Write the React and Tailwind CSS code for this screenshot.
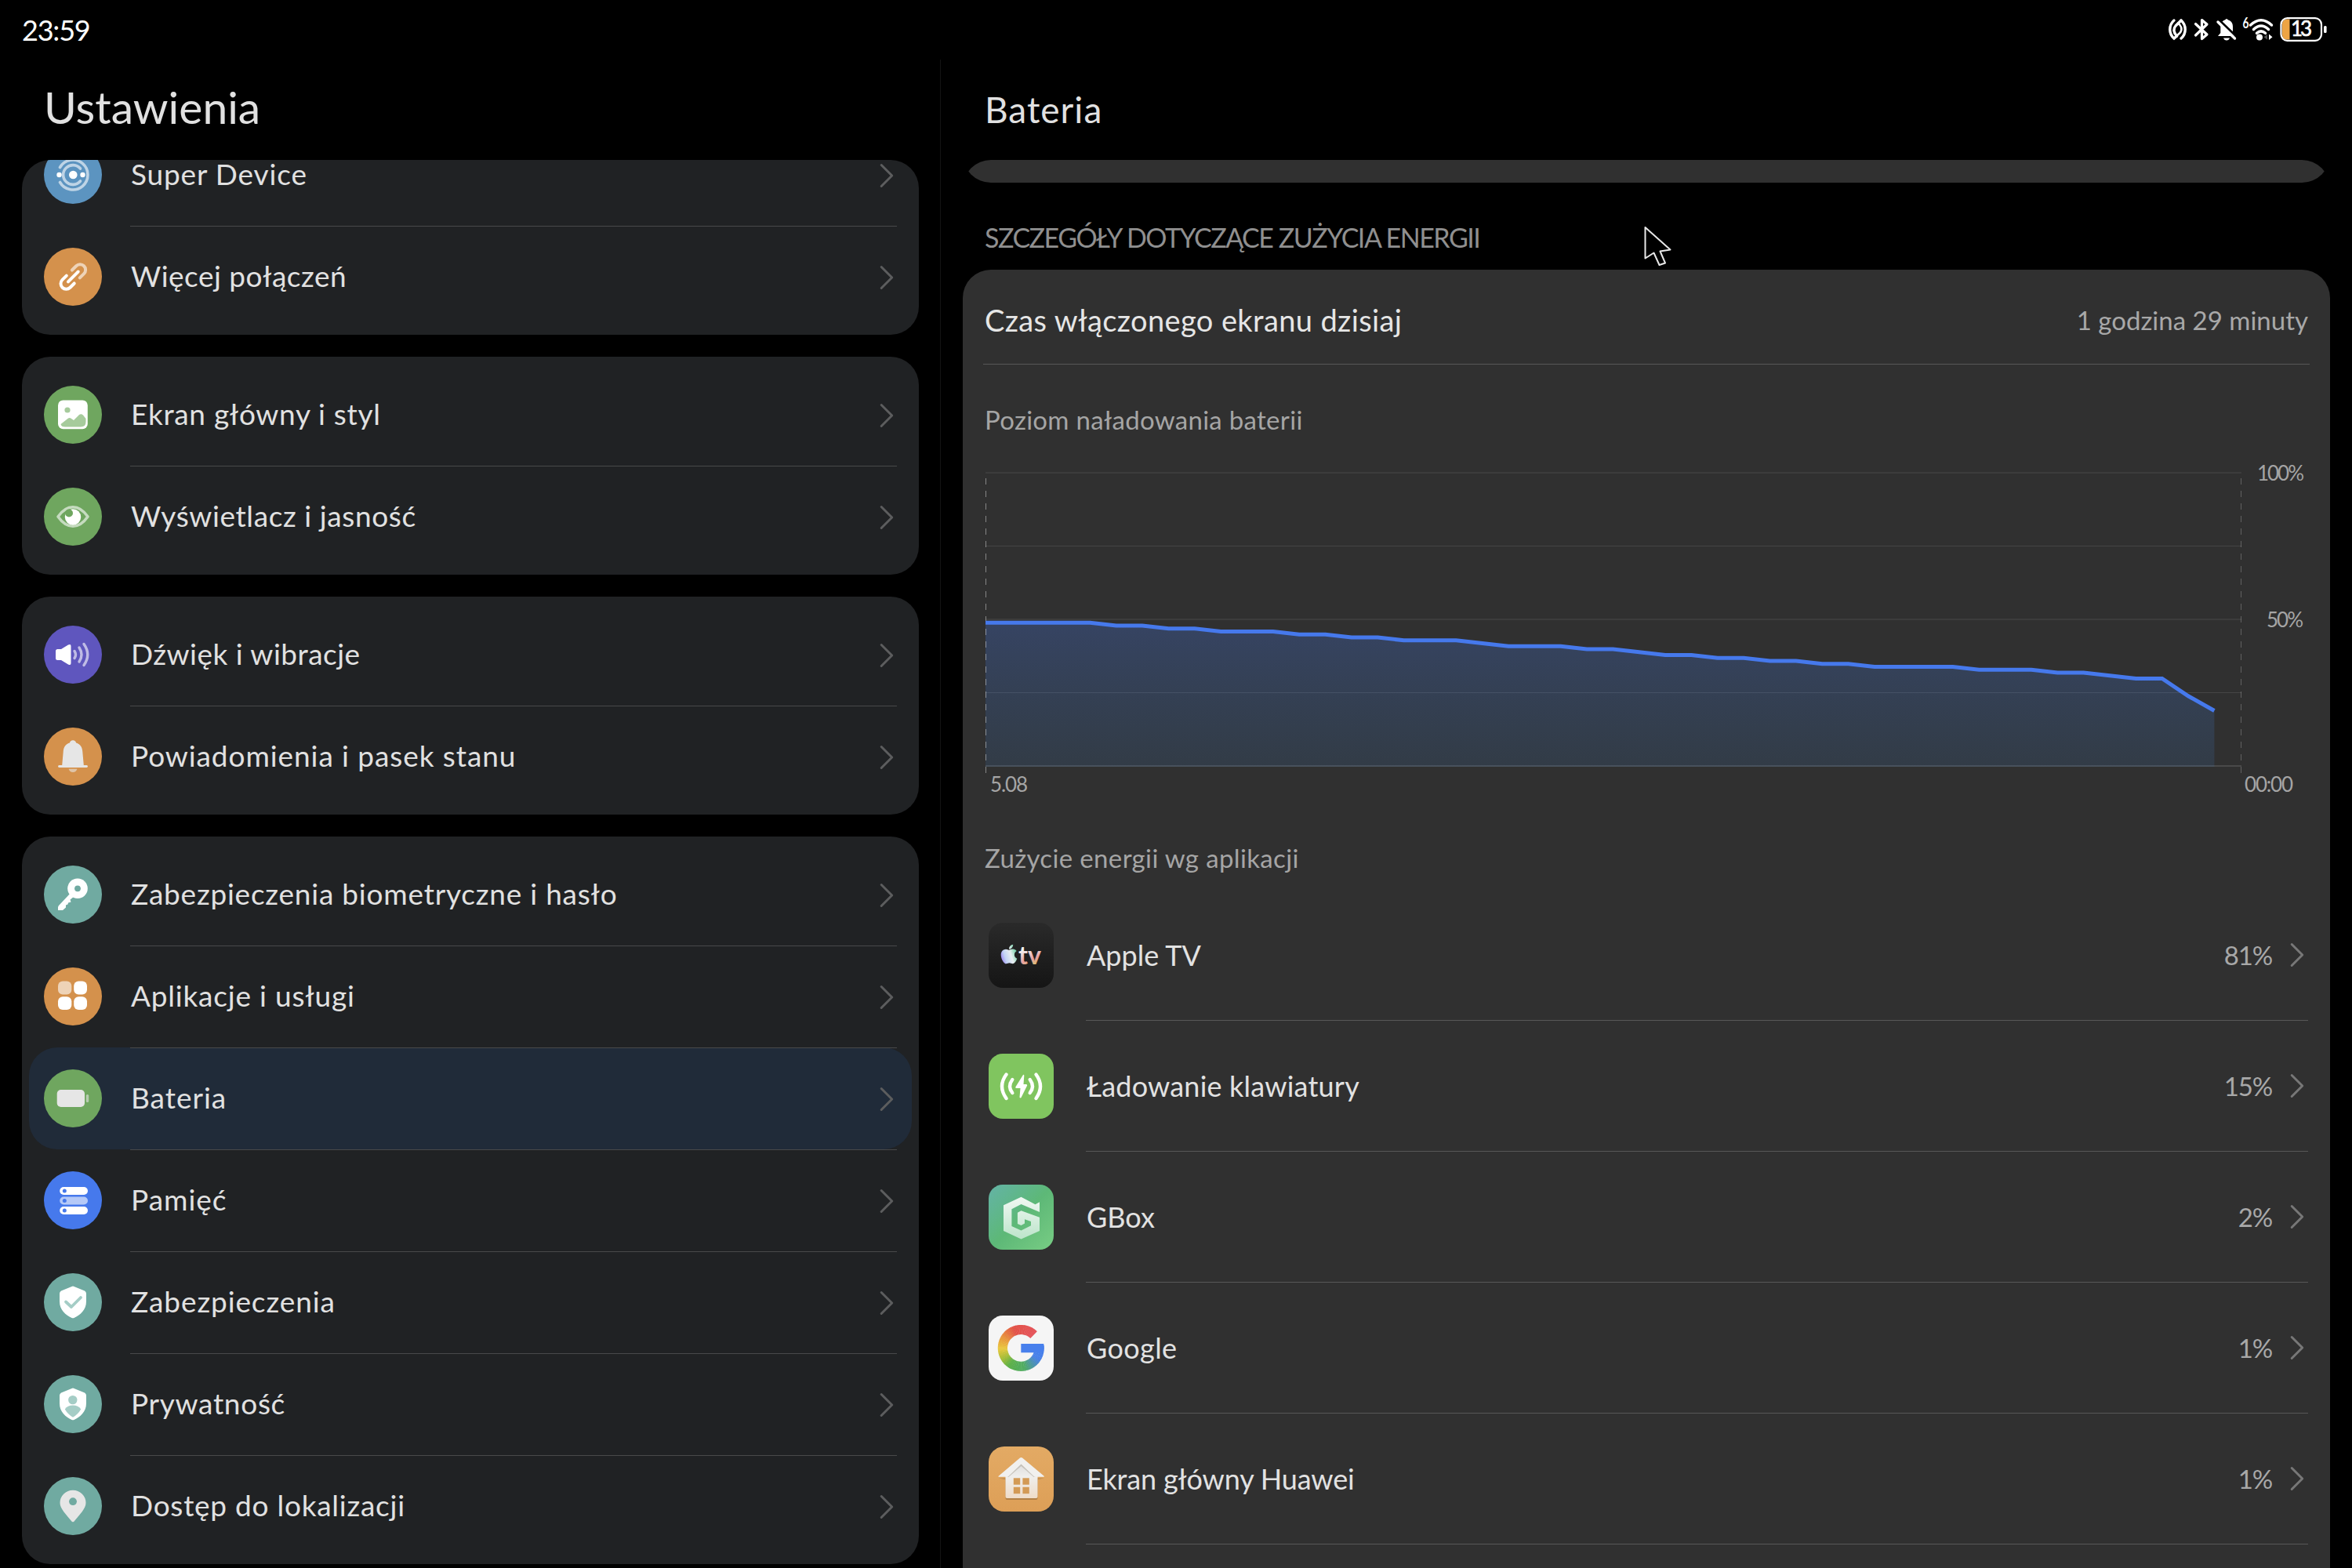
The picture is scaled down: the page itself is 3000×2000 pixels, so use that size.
import React from "react";
import { FaApple } from "react-icons/fa";

/* ---------- round glyphs of the settings list (74 x 74) ---------- */

const shield =
  "M35.5 17 Q37 16.2 38.5 17 L52 22.5 Q54 23.5 54 26 V36 C54 47 46 53.5 38.5 57 Q37 57.6 35.5 57 C28 53.5 20 47 20 36 V26 Q20 23.5 22 22.5Z";

const glyphs = {
  superDevice: (
    <g fill="none" strokeLinecap="round" strokeWidth="3.6">
      <path d="M20.5 27.5 A19 19 0 1 1 20.5 46.5" stroke="#fff" strokeOpacity=".6" />
      <path d="M46.5 29 A12.4 12.4 0 1 0 46.5 45" stroke="#fff" strokeOpacity=".6" />
      <circle cx="37.3" cy="37" r="5.3" fill="#fff" />
      <circle cx="19.5" cy="37" r="3.2" fill="#fff" />
      <circle cx="49.5" cy="37" r="3.2" fill="#fff" />
    </g>
  ),
  link: (
    <g fill="none" stroke="#fff" strokeWidth="4" strokeLinecap="round" transform="translate(37.3 37) rotate(-45)">
      <path d="M5 -7 H12.5 A7 7 0 0 1 12.5 7 H5" strokeOpacity=".6" />
      <path d="M-5 -7 H-12.5 A7 7 0 0 0 -12.5 7 H-5" />
      <path d="M-9 0 H9" />
    </g>
  ),
  picture: (
    <g>
      <rect x="18" y="18.4" width="37.8" height="36.8" rx="6.5" fill="#fff" />
      <circle cx="30" cy="31" r="3.6" fill="#a6cb9c" />
      <path d="M21.5 49 L31 41.5 Q33 40.3 35 42 L38 44 L45 37 Q47.5 35.3 50 37.5 L53.5 42 V46 Q53.5 52.5 47 52.5 H27 Q22 52.5 21.5 49Z" fill="#a6cb9c" />
    </g>
  ),
  eye: (
    <g>
      <path d="M18 37 C24 28.5 30.5 24.8 37 24.8 S50 28.5 56 37 C50 45.5 43.5 49.2 37 49.2 S24 45.5 18 37Z" fill="none" stroke="#fff" strokeOpacity=".6" strokeWidth="3.6" strokeLinejoin="round" />
      <circle cx="37" cy="37.5" r="10.2" fill="#fff" />
      <circle cx="32" cy="32.5" r="5" fill="#6fa65f" />
    </g>
  ),
  sound: (
    <g fill="none" strokeLinecap="round">
      <path d="M17.5 30 H22 L31 24.6 Q34.5 23 34.5 26 V48 Q34.5 51 31 49.4 L22 44 H17.5 Q15 44 15 41.5 V32.5 Q15 30 17.5 30Z" fill="#fff" />
      <g stroke="#fff" strokeOpacity=".6" strokeWidth="3.4">
        <path d="M39 32.5 Q42 37 39 41.5" />
        <path d="M45 28 Q51 37 45 46" />
        <path d="M51 23.5 Q60.5 37 51 50.5" />
      </g>
    </g>
  ),
  bell: (
    <g fill="#e6e6e6">
      <circle cx="37" cy="20.5" r="4.2" />
      <path d="M37 19 C46 19 49 25 49.3 31 L50.8 48 H54.5 Q56 48.2 56 49.5 T54.5 51 H19.5 Q18 50.8 18 49.5 T19.5 48 H23.2 L24.7 31 C25 25 28 19 37 19Z" />
      <path d="M31.5 52.8 H42.5 Q41 57 37 57 T31.5 52.8Z" fillOpacity=".6" />
    </g>
  ),
  key: (
    <g>
      <path d="M35 34 L19 51 Q18 52.2 18 53.5 V57 H24 L28 53.5 V50.5 L30.5 49.5 L31 47.5 L34.5 46.5 L33.5 43.5 L36 41.5 L40 38Z" fill="#fff" />
      <circle cx="43" cy="29.3" r="12.8" fill="#fff" />
      <circle cx="43" cy="29.3" r="3.9" fill="#70aaa1" />
    </g>
  ),
  apps: (
    <g fill="#fff">
      <rect x="18" y="17.6" width="17.3" height="16.8" rx="6" fillOpacity=".6" />
      <rect x="38.2" y="17.6" width="16.8" height="16.8" rx="6" />
      <rect x="18" y="37.2" width="17.3" height="16.8" rx="6" />
      <rect x="38.2" y="37.2" width="16.8" height="16.8" rx="6" />
    </g>
  ),
  battery: (
    <g fill="#e6e6e6">
      <rect x="16.7" y="26" width="35.3" height="22" rx="5" />
      <rect x="53.8" y="32" width="3.4" height="10" rx="1.5" fillOpacity=".6" />
    </g>
  ),
  storage: (
    <g>
      <rect x="20.2" y="20" width="35.8" height="10" rx="5" fill="#fff" />
      <rect x="20.2" y="32.5" width="35.8" height="10" rx="5" fill="#fff" fillOpacity=".6" />
      <rect x="20.2" y="45" width="35.8" height="10" rx="5" fill="#fff" />
      <g fill="#4679ec">
        <circle cx="26.3" cy="25" r="2.5" />
        <circle cx="26.3" cy="37.5" r="2.5" />
        <circle cx="26.3" cy="50" r="2.5" />
      </g>
    </g>
  ),
  security: (
    <g>
      <path d={shield} fill="#fff" />
      <path d="M28 36.5 L35 43 L47 31" fill="none" stroke="#a5cdc6" strokeWidth="3.8" strokeLinecap="round" strokeLinejoin="round" />
    </g>
  ),
  privacy: (
    <g>
      <path d={shield} fill="#fff" />
      <circle cx="36.8" cy="31.6" r="5.7" fill="#a5cdc6" />
      <path d="M26.8 43.5 Q30 38.4 37 38.4 T47.2 43.5 Q43.5 50 37 53.8 Q30.5 50 26.8 43.5Z" fill="#a5cdc6" />
    </g>
  ),
  location: (
    <g>
      <path d="M37 57.2 Q35.8 57.2 35 56 C28.5 47.5 20.5 40.5 20.5 33 A16.5 16.2 0 0 1 53.5 33 C53.5 40.5 45.5 47.5 39 56 Q38.2 57.2 37 57.2Z" fill="#e6e6e6" />
      <circle cx="37" cy="31.2" r="4.9" fill="#70aaa1" />
    </g>
  ),
};

const groups = [
  [
    { label: "Super Device", glyph: "superDevice", color: "bg-[#5c94c0]", track: "tracking-[0.85px]" },
    { label: "Więcej połączeń", glyph: "link", color: "bg-[#d4914c]", track: "tracking-[0.5px]" },
  ],
  [
    { label: "Ekran główny i styl", glyph: "picture", color: "bg-[#6fa65f]", track: "tracking-[0.7px]" },
    { label: "Wyświetlacz i jasność", glyph: "eye", color: "bg-[#6fa65f]", track: "tracking-[0.6px]" },
  ],
  [
    { label: "Dźwięk i wibracje", glyph: "sound", color: "bg-[#5f56be]", track: "tracking-[0.5px]" },
    { label: "Powiadomienia i pasek stanu", glyph: "bell", color: "bg-[#d4914c]", track: "tracking-[0.92px]" },
  ],
  [
    { label: "Zabezpieczenia biometryczne i hasło", glyph: "key", color: "bg-[#70aaa1]", track: "tracking-[0.78px]" },
    { label: "Aplikacje i usługi", glyph: "apps", color: "bg-[#d4914c]", track: "tracking-[0.8px]" },
    { label: "Bateria", glyph: "battery", color: "bg-[#6fa65f]", track: "tracking-[1px]", selected: true },
    { label: "Pamięć", glyph: "storage", color: "bg-[#4679ec]", track: "tracking-[1px]" },
    { label: "Zabezpieczenia", glyph: "security", color: "bg-[#70aaa1]", track: "tracking-[0.9px]" },
    { label: "Prywatność", glyph: "privacy", color: "bg-[#70aaa1]", track: "tracking-[0.7px]" },
    { label: "Dostęp do lokalizacji", glyph: "location", color: "bg-[#70aaa1]", track: "tracking-[0.75px]" },
  ],
];

function Chevron({ className }) {
  return (
    <svg viewBox="0 0 18 32" className={`h-8 w-[18px] shrink-0 ${className}`} fill="none" stroke="currentColor" strokeWidth="3" strokeLinecap="round" strokeLinejoin="round">
      <path d="M2.2 2.5 L15.7 16 L2.2 29.5" />
    </svg>
  );
}

function SettingRow({ item, first }) {
  return (
    <div className={`mx-[9px] flex h-[130px] items-center px-[19px] ${item.selected ? "rounded-[36px] bg-[#202b39]" : ""}`}>
      <div className={`size-[74px] shrink-0 overflow-hidden rounded-full ${item.color}`}>
        <svg viewBox="0 0 74 74" className="size-full">{glyphs[item.glyph]}</svg>
      </div>
      <div className={`ml-9 flex flex-1 items-center justify-between self-stretch border-t pr-1 ${first ? "border-transparent" : "border-[#48494a]"}`}>
        <span className={`pb-[3px] pl-px text-[37px] leading-10 whitespace-nowrap text-[#e1e1e1] ${item.track}`}>{item.label}</span>
        <Chevron className="text-[#5c5d5e]" />
      </div>
    </div>
  );
}

/* ---------- status bar ---------- */

function StatusIcons() {
  return (
    <svg viewBox="2760 16 216 44" className="h-11 w-[216px]" fill="none" stroke="#fff">
      {/* nfc */}
      <g strokeWidth="3.4" strokeLinecap="round">
        <path d="M2773 26 C2766 32 2766 43 2773 49 L2776.5 46" />
        <path d="M2782 26 C2789 32 2789 43 2782 49" />
        <path d="M2782 26 L2775 33 C2771.5 37 2773 42 2776.5 46" />
        <path d="M2773 49 L2781 41.5 C2784 37 2782 32.5 2778 29.5" strokeWidth="2.6" />
      </g>
      {/* bluetooth */}
      <path d="M2800.5 30.5 L2815 44 L2808.5 49.5 V25.5 L2815 31 L2800.5 45" strokeWidth="3.2" strokeLinecap="round" strokeLinejoin="round" />
      {/* muted bell */}
      <path d="M2832 46 H2850 L2848 43 V34 C2848 28.5 2844.5 26 2842 25.6 Q2840 22.5 2838 25.6 C2835 26.3 2832.5 29 2832.3 34 V42 L2829 46Z" fill="#fff" stroke="none" />
      <path d="M2836 48.5 H2844 Q2843 51.5 2840 51.5 T2836 48.5Z" fill="#fff" stroke="none" />
      <path d="M2830.5 25.5 L2853 47" stroke="#000" strokeWidth="3" />
      <path d="M2829 28 L2850.5 49" strokeWidth="3.4" strokeLinecap="round" />
      {/* wifi */}
      <g strokeWidth="3.5" strokeLinecap="round">
        <path d="M2870.5 32 Q2884 19.5 2897.5 32" />
        <path d="M2874.5 37.5 Q2884 28.5 2893.5 37.5" />
        <path d="M2878.5 42.3 Q2884 37.5 2889.5 42.3" />
      </g>
      <circle cx="2882" cy="47.5" r="4" fill="#fff" stroke="none" />
      <path d="M2892 44 V50.5 L2887.5 47.2Z" fill="#555" stroke="none" />
      <path d="M2894 43.5 V51 L2898.5 47.2Z" fill="#fff" stroke="none" />
      <text x="2860.5" y="36" fontSize="18" fontWeight="700" fill="#fff" stroke="none" textLength="8" lengthAdjust="spacingAndGlyphs">6</text>
      {/* battery */}
      <path d="M2919 24.5 H2920.5 V50.5 H2917 Q2911 50 2911 44 V31 Q2911 25 2917 24.5Z" fill="#eda444" stroke="none" />
      <rect x="2909.5" y="23.2" width="51.5" height="28.6" rx="8" strokeWidth="2.2" />
      <rect x="2964" y="33" width="3.6" height="9" rx="1.5" fill="#fff" stroke="none" />
      <text x="2922" y="46.2" fontSize="26" fontWeight="400" fill="#fff" stroke="#fff" strokeWidth=".6" textLength="27">13</text>
    </svg>
  );
}

/* ---------- battery chart ---------- */

const levels = [
  49, 49, 49, 49, 49, 48, 48, 47, 47, 46, 46, 46, 45, 45, 44, 44, 43, 43, 43, 42, 41, 41, 41, 40,
  40, 39, 38, 38, 37, 37, 36, 36, 35, 35, 34, 34, 34, 34, 33, 33, 33, 32, 32, 31, 30, 30, 24, 19,
];

function LevelChart() {
  const x = (i) => 1257 + i * 33.35;
  const y = (v) => 977.6 - v * 3.74;
  const line = levels.map((v, i) => `${x(i).toFixed(1)},${y(v).toFixed(1)}`).join(" ");
  return (
    <svg viewBox="1228 555 1744 480" className="block h-[480px] w-[1744px] shrink-0">
      <defs>
        <linearGradient id="level" gradientUnits="userSpaceOnUse" x1="0" x2="0" y1="794" y2="978">
          <stop offset="0" stopColor="#4679ec" stopOpacity=".27" />
          <stop offset="1" stopColor="#3f7ec8" stopOpacity=".15" />
        </linearGradient>
      </defs>
      <g fill="#fff">
        <rect x="1257" y="602" width="1602" height="2" fillOpacity=".06" />
        <rect x="1257" y="696" width="1602" height="1" fillOpacity=".1" />
        <rect x="1257" y="789" width="1602" height="2" fillOpacity=".06" />
        <rect x="1257" y="883" width="1602" height="1" fillOpacity=".1" />
        <rect x="1257" y="976" width="1602" height="2" fillOpacity=".12" />
      </g>
      <polygon points={`1257,978 ${line} ${x(47)},978`} fill="url(#level)" />
      <path d="M1257.5 610 V986" stroke="#fff" strokeOpacity=".42" strokeDasharray="8 8" />
      <path d="M2858.5 610 V986" stroke="#fff" strokeOpacity=".24" strokeDasharray="8 8" />
      <polyline points={line} fill="none" stroke="#4679ec" strokeWidth="5" />
      <g fill="#a5a5a5" fontSize="26">
        <text x="2879" y="613" textLength="60">100%</text>
        <text x="2891" y="800" textLength="47">50%</text>
        <text x="1263" y="1010" textLength="48">5.08</text>
        <text x="2863" y="1010" textLength="62">00:00</text>
      </g>
    </svg>
  );
}

/* ---------- app icons (83 x 83) ---------- */

function AppleTv() {
  return (
    <div className="size-[83px] shrink-0 rounded-[18px] bg-linear-to-b from-[#2a2a2a] to-[#151515]">
      <svg viewBox="0 0 83 83" className="size-full">
        <defs>
          <linearGradient id="tvApple" x1="0" y1="1" x2="1" y2=".6">
            <stop offset="0" stopColor="#8f6bf0" />
            <stop offset=".35" stopColor="#c3d4f5" />
            <stop offset=".7" stopColor="#e8eef0" />
            <stop offset="1" stopColor="#7fd3b0" />
          </linearGradient>
          <linearGradient id="tvText" x1="0" y1="0" x2=".25" y2="1">
            <stop offset=".4" stopColor="#f2f2f2" />
            <stop offset=".75" stopColor="#e8a0a0" />
            <stop offset="1" stopColor="#d8c46a" />
          </linearGradient>
        </defs>
        <FaApple x="12" y="26" size={28} fill="url(#tvApple)" />
        <text x="38" y="53" fontSize="33" fontWeight="700" fill="url(#tvText)" textLength="29" lengthAdjust="spacingAndGlyphs">tv</text>
      </svg>
    </div>
  );
}

function Charging() {
  return (
    <div className="size-[83px] shrink-0 rounded-[18px] bg-[#80c55f]">
      <svg viewBox="0 0 83 83" className="size-full" fill="none" stroke="#fff" strokeLinecap="round">
        <path d="M44 27 L34.3 42.5 Q34 44 35.5 44 H40.5 L39.5 55.5 Q40 57 41.5 56 L49.2 40.5 Q49.3 39 48 39 H44.5 L45.3 28 Q45.2 26.2 44 27Z" fill="#fff" stroke="none" />
        <g strokeWidth="4.4">
          <path d="M22.5 26.5 Q11.5 41.5 22.5 57" />
          <path d="M60.5 26.5 Q71.5 41.5 60.5 57" />
          <path d="M30.3 33 Q23.8 41.7 30.3 50" />
          <path d="M52.7 33 Q59.2 41.7 52.7 50" />
        </g>
      </svg>
    </div>
  );
}

function GBox() {
  return (
    <div className="size-[83px] shrink-0 rounded-[18px] bg-linear-to-br from-[#64b3a6] via-[#5db877] to-[#78cd84]">
      <svg viewBox="0 0 83 83" className="size-full">
        <defs>
          <linearGradient id="gbox" x1="0" y1="0" x2="0" y2="1">
            <stop offset="0" stopColor="#f1f8f3" />
            <stop offset="1" stopColor="#bce4ca" />
          </linearGradient>
        </defs>
        <path d="M41.5 15.7 L59.5 25.3 L65 22.3 V35 L41.5 25 L29.4 31.3 V53 L41.5 58.5 L54 52.3 V47 L46 44.2 V49.5 L41.5 52 L36.9 50 V35.7 L41.5 33.3 L65 41.7 V59 L41.5 69.5 L19 59 V26.3Z" fill="url(#gbox)" />
      </svg>
    </div>
  );
}

const gStops = [
  [-46, [229, 85, 92]],
  [-110, [226, 82, 72]],
  [-150, [232, 150, 60]],
  [-182, [234, 200, 62]],
  [-212, [160, 188, 56]],
  [-235, [92, 176, 72]],
  [-280, [80, 172, 100]],
  [-308, [74, 145, 175]],
  [-328, [72, 128, 232]],
  [-366, [72, 128, 236]],
];

function gColor(a) {
  for (let i = 1; i < gStops.length; i++) {
    const [a0, c0] = gStops[i - 1];
    const [a1, c1] = gStops[i];
    if (a >= a1) {
      const t = (a - a0) / (a1 - a0);
      return `rgb(${c0.map((v, k) => Math.round(v + (c1[k] - v) * t)).join(",")})`;
    }
  }
  return "rgb(72,128,236)";
}

function GoogleIcon() {
  const r = 23.4;
  const pt = (a) => {
    const t = (a * Math.PI) / 180;
    return `${(41.3 + r * Math.cos(t)).toFixed(2)} ${(41.4 + r * Math.sin(t)).toFixed(2)}`;
  };
  const segments = [];
  for (let a = -46; a > -366; a -= 4) segments.push(a);
  return (
    <div className="size-[83px] shrink-0 rounded-[18px] bg-[#f5f5f5]">
      <svg viewBox="0 0 83 83" className="size-full">
        {segments.map((a) => (
          <path key={a} d={`M${pt(a)} A${r} ${r} 0 0 0 ${pt(Math.max(a - 5, -367))}`} stroke={gColor(a - 2)} strokeWidth="12.2" fill="none" />
        ))}
        <path d="M41.3 36 H70.3 Q71 42 69.5 47.3 H41.3Z" fill="#4880ec" />
      </svg>
    </div>
  );
}

function HouseIcon() {
  return (
    <div className="size-[83px] shrink-0 rounded-[20px] bg-linear-to-b from-[#e3aa64] to-[#dd9f57]">
      <svg viewBox="0 0 83 83" className="size-full">
        <defs>
          <linearGradient id="house" x1="0" y1="0" x2="0" y2="1">
            <stop offset="0" stopColor="#dcdcdc" />
            <stop offset=".4" stopColor="#efeeec" />
            <stop offset="1" stopColor="#efdcc8" />
          </linearGradient>
        </defs>
        <path d="M12.6 40.5 H71 L62.5 42 V66 Q62.5 68 60.5 68 H23.5 Q21.5 68 21.5 66 V42Z" fill="#7d5a30" fillOpacity=".45" />
        <path d="M41.5 20 L62.5 36 V64 Q62.5 66 60.5 66 H23.5 Q21.5 66 21.5 64 V36Z" fill="url(#house)" />
        <path d="M41.5 25 L57.5 39 H60 L41.5 21.5 L23 39 H25.5Z" fill="#a89f94" fillOpacity=".5" />
        <path d="M40 14.6 Q41.5 13.4 43 14.6 L71 38 Q71 38.8 70 38.8 H58.5 L41.5 22.5 L24.5 38.8 H13 Q12 38.8 12.4 38Z" fill="#f1f0ee" />
        <g fill="#d39a55">
          <rect x="31.8" y="40.3" width="8.4" height="8.4" />
          <rect x="43.4" y="40.3" width="8.4" height="8.4" />
          <rect x="31.8" y="51.8" width="8.4" height="8.4" />
          <rect x="43.4" y="51.8" width="8.4" height="8.4" />
        </g>
      </svg>
    </div>
  );
}

const apps = [
  { name: "Apple TV", share: "81%", Icon: AppleTv, track: "tracking-normal" },
  { name: "Ładowanie klawiatury", share: "15%", Icon: Charging, track: "tracking-[0.2px]" },
  { name: "GBox", share: "2%", Icon: GBox, track: "tracking-normal" },
  { name: "Google", share: "1%", Icon: GoogleIcon, track: "tracking-[0.4px]" },
  { name: "Ekran główny Huawei", share: "1%", Icon: HouseIcon, track: "tracking-[-0.15px]" },
];

function AppRow({ app }) {
  return (
    <div className="flex h-[167px] shrink-0 items-center pr-7 pl-[33px]">
      <app.Icon />
      <div className="ml-[41px] flex flex-1 items-center self-stretch border-b border-[#575757]">
        <span className={`flex-1 pb-px pl-px text-[36px] leading-10 text-[#e2e2e2] ${app.track}`}>{app.name}</span>
        <span className="mr-[23px] pb-px text-[33px] leading-10 tracking-[-1.2px] text-[#a8a8a8]">{app.share}</span>
        <Chevron className="mr-[5px] text-[#777]" />
      </div>
    </div>
  );
}

function Pointer() {
  return (
    <svg viewBox="0 0 44 60" className="absolute top-[284px] left-[2092px] h-[60px] w-11">
      <path d="M6.5 6 V45.5 L17.5 38.5 L24.5 54 L32 51.5 L25.5 36.5 L38.5 34.5Z" fill="#000" stroke="#e8e8e8" strokeWidth="2" strokeLinejoin="round" />
    </svg>
  );
}

export default function App() {
  return (
    <div className="relative flex h-[2000px] w-[3000px] flex-col overflow-hidden bg-black font-['Lato',sans-serif] text-[#e1e1e1]">
      <header className="flex h-[76px] shrink-0 items-center justify-between pr-6 pl-[28px]">
        <span className="text-[36px] leading-10 tracking-[-1.2px] text-white">23:59</span>
        <StatusIcons />
      </header>

      <div className="flex min-h-0 flex-1">
        <nav className="flex w-[1200px] shrink-0 flex-col border-r border-[#141414]">
          <h1 className="flex h-32 shrink-0 items-center pb-[7px] pl-14 text-[57px] leading-none">Ustawienia</h1>
          <div className="mr-[27px] ml-7 flex min-h-0 flex-1 flex-col overflow-hidden rounded-t-[36px]">
            <div className="-mt-[55px] flex flex-col gap-7">
              {groups.map((items, g) => (
                <section key={g} className="shrink-0 rounded-[36px] bg-[#202224] py-[9px]">
                  {items.map((item, i) => (
                    <SettingRow key={item.label} item={item} first={i === 0} />
                  ))}
                </section>
              ))}
            </div>
          </div>
        </nav>

        <main className="flex min-w-0 flex-1 flex-col pr-7 pl-7">
          <h2 className="flex h-32 shrink-0 items-center pl-7 text-[46px] leading-none tracking-[1px]">Bateria</h2>
          <div className="flex min-h-0 flex-1 flex-col overflow-hidden rounded-t-[36px]">
            <div className="-mt-[171px] h-[200px] shrink-0 rounded-[36px] bg-[#303030]" />
            <h3 className="h-[111px] shrink-0 pt-[50px] pl-7 text-[34px] leading-10 tracking-[-1.48px] text-[#8f8f8f]">SZCZEGÓŁY DOTYCZĄCE ZUŻYCIA ENERGII</h3>
            <section className="flex shrink-0 flex-col rounded-t-[36px] bg-[#303030]">
              <div className="mx-[26px] flex h-[121px] items-center justify-between border-b border-[#575757] pt-2 pr-[2px] pl-[2px]">
                <span className="text-[38px] leading-10 tracking-[0.38px] text-[#e6e6e6]">Czas włączonego ekranu dzisiaj</span>
                <span className="text-[33px] leading-10 text-[#a8a8a8]">1 godzina 29 minuty</span>
              </div>
              <h4 className="h-[90px] pt-[50px] pl-7 text-[33px] leading-10 tracking-[0.3px] text-[#a5a5a5]">Poziom naładowania baterii</h4>
              <LevelChart />
              <h4 className="mt-[39px] mb-[21px] h-10 pl-7 text-[33px] leading-10 tracking-[0.35px] text-[#a5a5a5]">Zużycie energii wg aplikacji</h4>
              {apps.map((app) => (
                <AppRow key={app.name} app={app} />
              ))}
              <div className="h-10" />
            </section>
          </div>
        </main>
      </div>

      <Pointer />
    </div>
  );
}
